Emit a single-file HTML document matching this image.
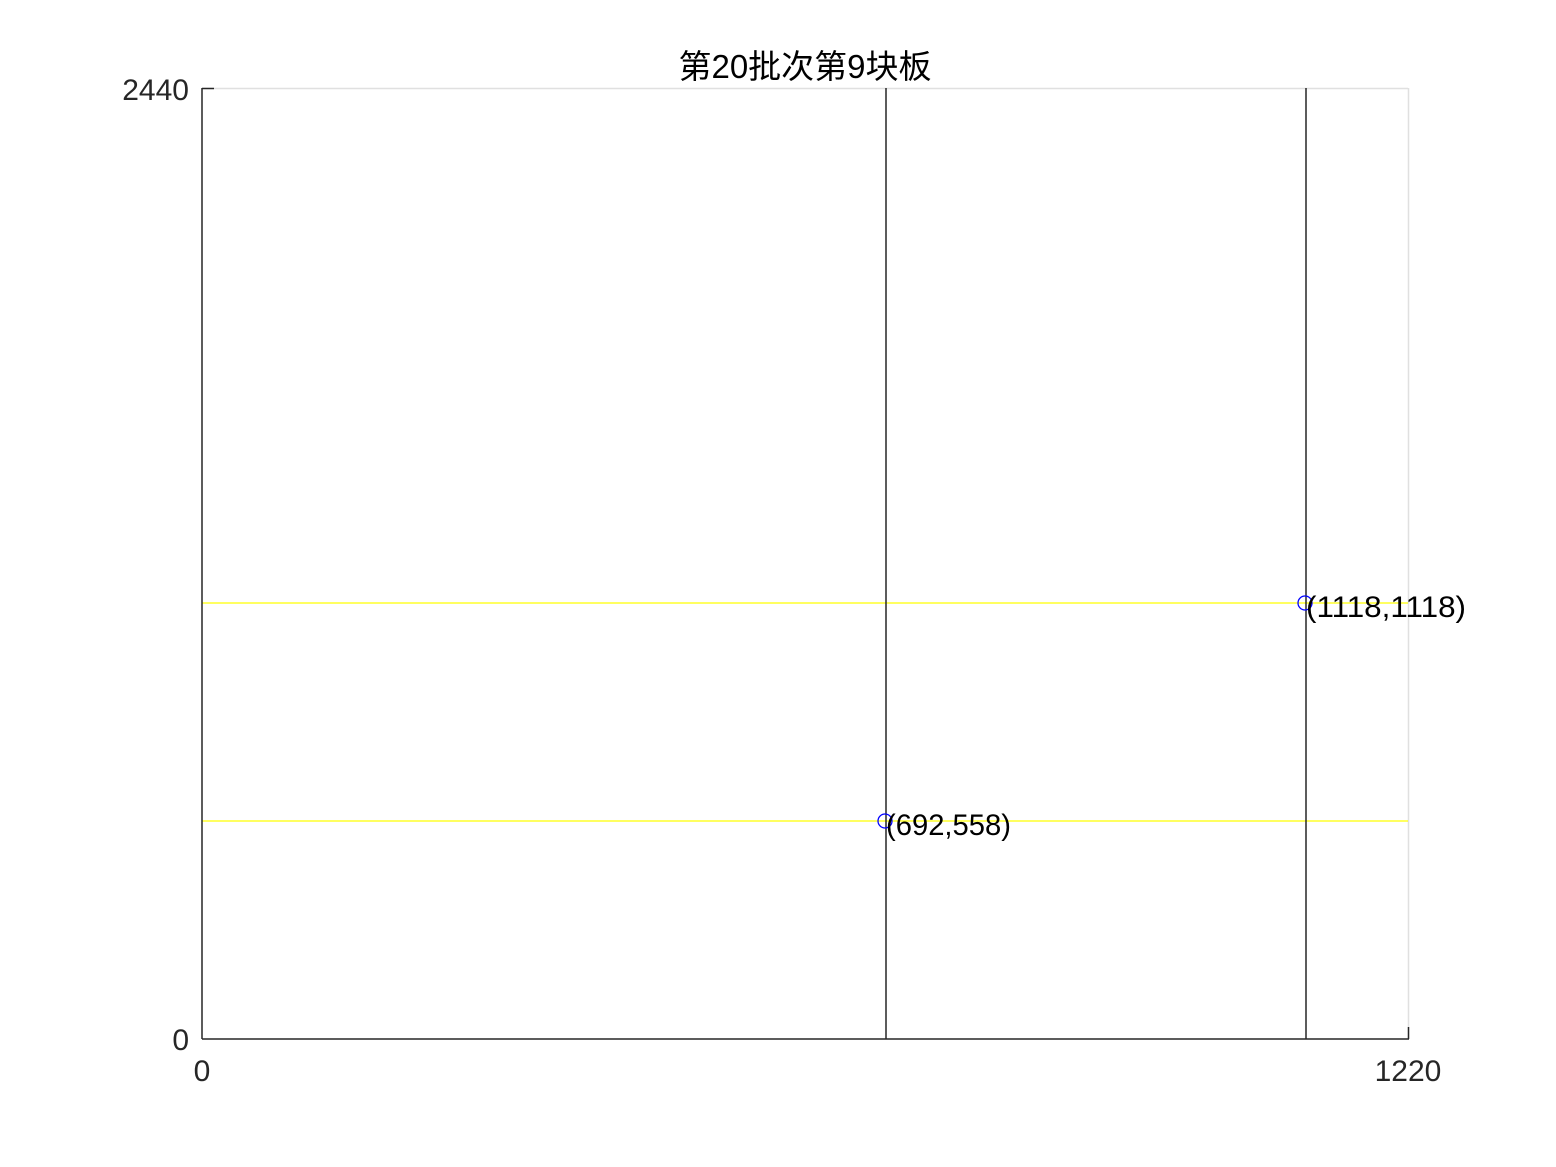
<!DOCTYPE html>
<html><head><meta charset="utf-8"><style>
html,body{margin:0;padding:0;background:#fff;}
svg{display:block;}
text{font-family:"Liberation Sans","Noto Sans CJK SC",sans-serif;}
</style></head><body>
<svg width="1556" height="1167" viewBox="0 0 1556 1167" xmlns="http://www.w3.org/2000/svg">
<rect width="1556" height="1167" fill="#fff"/>
<line x1="202" y1="88.5" x2="1408" y2="88.5" stroke="#e0e0e0" stroke-width="1.5"/>
<line x1="1408.5" y1="88" x2="1408.5" y2="1039" stroke="#e0e0e0" stroke-width="1.5"/>
<line x1="202" y1="603" x2="1408" y2="603" stroke="#ffff00" stroke-width="1.3"/>
<line x1="202" y1="821" x2="1408" y2="821" stroke="#ffff00" stroke-width="1.3"/>
<line x1="886" y1="88" x2="886" y2="1039" stroke="#262626" stroke-width="1.5"/>
<line x1="1306" y1="88" x2="1306" y2="1039" stroke="#262626" stroke-width="1.5"/>
<line x1="202" y1="1039" x2="1409" y2="1039" stroke="#262626" stroke-width="1.5"/>
<line x1="202" y1="88" x2="202" y2="1039" stroke="#262626" stroke-width="1.5"/>
<line x1="202" y1="88.5" x2="214" y2="88.5" stroke="#262626" stroke-width="1.5"/>
<line x1="1408.5" y1="1039" x2="1408.5" y2="1027" stroke="#262626" stroke-width="1.5"/>
<circle cx="885" cy="821" r="7" fill="none" stroke="#0000ff" stroke-width="1.3"/>
<circle cx="1305" cy="603" r="7" fill="none" stroke="#0000ff" stroke-width="1.3"/>
<text x="886" y="835" font-size="29.5" fill="#000" textLength="125" lengthAdjust="spacingAndGlyphs">(692,558)</text>
<text x="1306" y="617" font-size="29.5" fill="#000" textLength="160" lengthAdjust="spacingAndGlyphs">(1118,1118)</text>
<text x="189" y="100" font-size="30" fill="#262626" text-anchor="end">2440</text>
<text x="189" y="1050" font-size="30" fill="#262626" text-anchor="end">0</text>
<text x="202" y="1081" font-size="30" fill="#262626" text-anchor="middle">0</text>
<text x="1408" y="1081" font-size="30" fill="#262626" text-anchor="middle">1220</text>
<text x="805" y="78" font-size="33" fill="#000" text-anchor="middle">第20批次第9块板</text>
</svg>
</body></html>
